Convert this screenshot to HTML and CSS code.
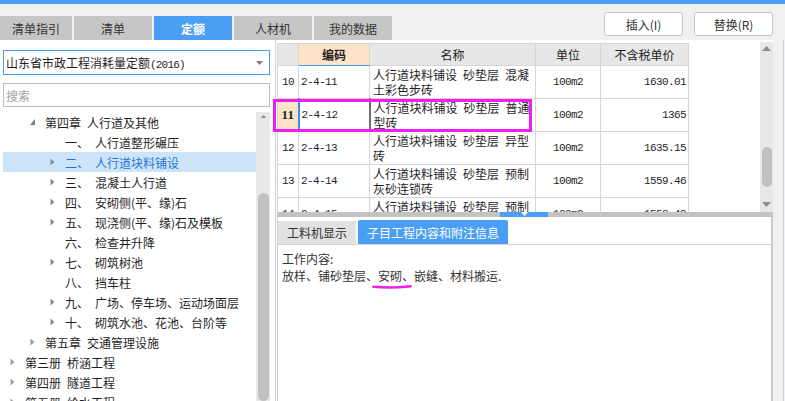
FILE: index.html
```html
<!DOCTYPE html>
<html lang="zh-CN">
<head>
    <meta charset="UTF-8">
    <meta name="viewport" content="width=device-width, initial-scale=1.0">
    <title>定额</title>
    <link rel="stylesheet" href="styles.css">
</head>
<body>
    <div class="topbar"></div>

    <div class="toolbar">
        <div class="tabs">
            <div class="tab first">清单指引</div>
            <div class="tab">清单</div>
            <div class="tab active">定额</div>
            <div class="tab">人材机</div>
            <div class="tab">我的数据</div>
        </div>
        <div class="actions">
            <button class="btn">插入(I)</button>
            <button class="btn">替换(R)</button>
        </div>
    </div>

    <div class="main">
        <!-- left: quota library tree -->
        <div class="left">
            <div class="select">
                <span>山东省市政工程消耗量定额<span class="num">(2016)</span></span>
                <svg class="caret" width="7" height="4" viewBox="0 0 7 4"><polygon points="0,0 7,0 3.5,4" fill="#7a7a7a"/></svg>
            </div>
            <div class="search">搜索</div>
            <div class="tree-wrap">
                <ul class="tree">
                    <li class="node l1"><span class="tog"><svg width="5" height="6" viewBox="0 0 5 6"><polygon points="5,0 5,6 0,6" fill="#7d7d7d"/></svg></span>第四章&ensp;人行道及其他</li>
                    <li class="node l2"><span class="tog"></span><span class="idx">一、</span>人行道整形碾压</li>
                    <li class="node l2 selected"><span class="tog"><svg width="5" height="8" viewBox="0 0 5 8"><polygon points="0.5,0.5 4.5,4 0.5,7.5" fill="#8a8a8a"/></svg></span><span class="idx">二、</span>人行道块料铺设</li>
                    <li class="node l2"><span class="tog"><svg width="5" height="8" viewBox="0 0 5 8"><polygon points="0.5,0.5 4.5,4 0.5,7.5" fill="#8a8a8a"/></svg></span><span class="idx">三、</span>混凝土人行道</li>
                    <li class="node l2"><span class="tog"><svg width="5" height="8" viewBox="0 0 5 8"><polygon points="0.5,0.5 4.5,4 0.5,7.5" fill="#8a8a8a"/></svg></span><span class="idx">四、</span>安砌侧(平、缘)石</li>
                    <li class="node l2"><span class="tog"><svg width="5" height="8" viewBox="0 0 5 8"><polygon points="0.5,0.5 4.5,4 0.5,7.5" fill="#8a8a8a"/></svg></span><span class="idx">五、</span>现浇侧(平、缘)石及模板</li>
                    <li class="node l2"><span class="tog"></span><span class="idx">六、</span>检查井升降</li>
                    <li class="node l2"><span class="tog"><svg width="5" height="8" viewBox="0 0 5 8"><polygon points="0.5,0.5 4.5,4 0.5,7.5" fill="#8a8a8a"/></svg></span><span class="idx">七、</span>砌筑树池</li>
                    <li class="node l2"><span class="tog"></span><span class="idx">八、</span>挡车柱</li>
                    <li class="node l2"><span class="tog"><svg width="5" height="8" viewBox="0 0 5 8"><polygon points="0.5,0.5 4.5,4 0.5,7.5" fill="#8a8a8a"/></svg></span><span class="idx">九、</span>广场、停车场、运动场面层</li>
                    <li class="node l2"><span class="tog"><svg width="5" height="8" viewBox="0 0 5 8"><polygon points="0.5,0.5 4.5,4 0.5,7.5" fill="#8a8a8a"/></svg></span><span class="idx">十、</span>砌筑水池、花池、台阶等</li>
                    <li class="node l1"><span class="tog"><svg width="5" height="8" viewBox="0 0 5 8"><polygon points="0.5,0.5 4.5,4 0.5,7.5" fill="#9a9a9a"/></svg></span>第五章&ensp;交通管理设施</li>
                    <li class="node l0"><span class="tog"><svg width="5" height="8" viewBox="0 0 5 8"><polygon points="0.5,0.5 4.5,4 0.5,7.5" fill="#a0a0a0"/></svg></span>第三册&ensp;桥涵工程</li>
                    <li class="node l0"><span class="tog"><svg width="5" height="8" viewBox="0 0 5 8"><polygon points="0.5,0.5 4.5,4 0.5,7.5" fill="#a0a0a0"/></svg></span>第四册&ensp;隧道工程</li>
                    <li class="node l0"><span class="tog"><svg width="5" height="8" viewBox="0 0 5 8"><polygon points="0.5,0.5 4.5,4 0.5,7.5" fill="#a0a0a0"/></svg></span>第五册&ensp;给水工程</li>
                </ul>
                <div class="vscroll tree-scroll">
                    <svg class="arrow" width="9" height="5" viewBox="0 0 9 5"><polygon points="0,5 9,5 4.5,0" fill="#8c8c8c"/></svg>
                    <div class="thumb"></div>
                </div>
            </div>
        </div>

        <!-- right: quota grid + detail -->
        <div class="right">
            <div class="grid-area">
                <div class="grid-box">
                    <table class="grid">
                        <colgroup>
                            <col class="c-no"><col class="c-code"><col class="c-name"><col class="c-unit"><col class="c-price">
                        </colgroup>
                        <thead>
                            <tr><th></th><th class="key">编码</th><th>名称</th><th>单位</th><th>不含税单价</th></tr>
                        </thead>
                        <tbody>
                            <tr>
                                <td class="no mono">10</td>
                                <td class="code mono">2-4-11</td>
                                <td class="name">人行道块料铺设&ensp;砂垫层&ensp;混凝<br>土彩色步砖</td>
                                <td class="unit mono">100m2</td>
                                <td class="price mono">1630.01</td>
                            </tr>
                            <tr class="current">
                                <td class="no">11</td>
                                <td class="code mono">2-4-12</td>
                                <td class="name">人行道块料铺设&ensp;砂垫层&ensp;普通<br>型砖</td>
                                <td class="unit mono">100m2</td>
                                <td class="price mono">1365</td>
                            </tr>
                            <tr>
                                <td class="no mono">12</td>
                                <td class="code mono">2-4-13</td>
                                <td class="name">人行道块料铺设&ensp;砂垫层&ensp;异型<br>砖</td>
                                <td class="unit mono">100m2</td>
                                <td class="price mono">1635.15</td>
                            </tr>
                            <tr>
                                <td class="no mono">13</td>
                                <td class="code mono">2-4-14</td>
                                <td class="name">人行道块料铺设&ensp;砂垫层&ensp;预制<br>灰砂连锁砖</td>
                                <td class="unit mono">100m2</td>
                                <td class="price mono">1559.46</td>
                            </tr>
                            <tr>
                                <td class="no mono">14</td>
                                <td class="code mono">2-4-15</td>
                                <td class="name">人行道块料铺设&ensp;砂垫层&ensp;预制<br>混凝土砖</td>
                                <td class="unit mono">100m2</td>
                                <td class="price mono">1553.48</td>
                            </tr>
                        </tbody>
                    </table>
                </div>
                <div class="vscroll grid-scroll">
                    <svg class="arrow" width="9" height="5" viewBox="0 0 9 5"><polygon points="0,5 9,5 4.5,0" fill="#8c8c8c"/></svg>
                    <div class="thumb"></div>
                    <svg class="arrow down" width="9" height="5" viewBox="0 0 9 5"><polygon points="0,0 9,0 4.5,5" fill="#8c8c8c"/></svg>
                </div>
                <div class="focus-box"></div>
            </div>

            <div class="splitter">
                <span class="handle"><svg width="7" height="4" viewBox="0 0 7 4"><polygon points="0,0 7,0 3.5,4" fill="#fff"/></svg></span>
            </div>

            <div class="bottom">
                <div class="btabs">
                    <div class="btab">工料机显示</div>
                    <div class="btab active">子目工程内容和附注信息</div>
                </div>
                <div class="content">
                    <p>工作内容:</p>
                    <p>放样、铺砂垫层、<span class="mark">安砌<svg class="scribble" width="40" height="6" viewBox="0 0 40 6"><path d="M1.5 2.8 Q20 4.6 38.5 2.2" fill="none" stroke="#f01ef0" stroke-width="2.4" stroke-linecap="round"/></svg></span>、嵌缝、材料搬运.</p>
                </div>
            </div>
        </div>

        <div class="edge"></div>
    </div>
</body>
</html>
```

FILE: styles.css
```css
* {
    margin: 0;
    padding: 0;
    box-sizing: border-box;
}

body {
    width: 785px;
    height: 401px;
    overflow: hidden;
    background: #f0f0f0;
    font-family: "Noto Sans CJK SC", sans-serif;
    font-size: 12px;
    color: #1f1f1f;
}

.mono {
    font-family: "Liberation Mono", monospace;
    font-size: 11px;
    letter-spacing: -0.6px;
}

.topbar {
    height: 4px;
    background: #4a9ff5;
}

/* top tabs and buttons */
.toolbar {
    height: 36px;
    display: flex;
    justify-content: space-between;
}

.tabs {
    display: flex;
    align-items: flex-end;
    gap: 2px;
}

.tab {
    width: 78px;
    height: 24px;
    background: #c6c6c6;
    color: #333;
    display: flex;
    align-items: center;
    justify-content: center;
}

.tab.first {
    width: 72px;
}

.tab.active {
    background: #4a9ff5;
    color: #fff;
    font-weight: bold;
}

.actions {
    display: flex;
    gap: 11px;
    padding: 8px 12px 0 0;
}

.btn {
    width: 79px;
    height: 24px;
    background: #fff;
    border: 1px solid #c6c6c6;
    border-radius: 3px;
    font: inherit;
    color: #333;
}

/* main area */
.main {
    height: 361px;
    display: flex;
    background: #fff;
    position: relative;
}

.left {
    width: 276px;
    border-right: 1px solid #d3d3d3;
    padding-left: 3px;
    display: flex;
    flex-direction: column;
}

.select {
    margin-top: 10px;
    width: 267px;
    height: 25px;
    border: 1px solid #4a9ff5;
    padding: 0 6px 0 2px;
    display: flex;
    align-items: center;
    justify-content: space-between;
}

.select .num {
    font-family: "Liberation Mono", monospace;
    font-size: 11px;
    letter-spacing: -0.8px;
}

.search {
    margin-top: 8px;
    width: 267px;
    height: 24px;
    border: 1px solid #bdbdbd;
    padding-left: 2px;
    color: #a3a3a3;
    display: flex;
    align-items: center;
}

.tree-wrap {
    margin-top: 5px;
    width: 267px;
    flex: 1;
    display: flex;
    overflow: hidden;
}

.tree {
    flex: 1;
    list-style: none;
}

.node {
    height: 20px;
    display: flex;
    align-items: center;
    white-space: nowrap;
    color: #1f1f1f;
}

.node.l0 { padding-left: 7px; }
.node.l1 { padding-left: 27px; }
.node.l2 { padding-left: 47px; }

.node.selected {
    background: #cce4f7;
    color: #1f74e0;
}

.tog {
    width: 15px;
    height: 20px;
    display: flex;
    align-items: center;
}

.idx {
    width: 30px;
}

/* scrollbars */
.vscroll {
    background: #e8e8e8;
    display: flex;
    flex-direction: column;
    align-items: center;
}

.vscroll .thumb {
    background: #c1c1c1;
    border-radius: 6px;
}

.tree-scroll {
    width: 14px;
    padding-top: 3px;
}

.tree-scroll .thumb {
    margin-top: 75px;
    width: 11px;
    height: 300px;
}

.grid-scroll {
    width: 13px;
    margin-top: 2px;
    padding: 4px 0 5px;
}

.grid-scroll .thumb {
    margin-top: 96px;
    width: 10px;
    height: 40px;
}

.grid-scroll .down {
    margin-top: auto;
}

/* right side */
.right {
    width: 497px;
    padding-left: 1px;
    display: flex;
    flex-direction: column;
}

.grid-area {
    height: 172px;
    display: flex;
    position: relative;
}

.grid-box {
    flex: 1;
    padding-top: 3px;
    overflow: hidden;
}

.grid {
    width: 411px;
    table-layout: fixed;
    border-collapse: collapse;
}

.c-no { width: 21px; }
.c-code { width: 71px; }
.c-name { width: 166px; }
.c-unit { width: 65px; }
.c-price { width: 88px; }

.grid th,
.grid td {
    border: 1px solid #d6d6d6;
    white-space: nowrap;
}

.grid th {
    height: 22px;
    background: #e7e7e7;
    font-weight: normal;
    color: #222;
}

.grid th.key {
    background: #fde4c6;
    font-weight: bold;
    border-bottom: 1px solid #4a9ff5;
}

.grid td {
    height: 33px;
}

.grid .no {
    text-align: center;
}

.grid .code {
    padding-left: 2px;
}

.grid .name {
    padding: 0 3px;
    line-height: 15px;
}

.grid .unit {
    text-align: center;
}

.grid .price {
    text-align: right;
    padding-right: 2px;
}

.current .no {
    background: #fde4c6;
    font-family: "Liberation Serif", serif;
    font-weight: bold;
    font-size: 13px;
}

.current .code {
    border-left: 2px solid #3d8fe9;
}

.current .name {
    border-left: 2px solid #6e6e6e;
}

.focus-box {
    position: absolute;
    left: -4px;
    top: 59px;
    width: 259px;
    height: 33px;
    border: 3px solid #f01ef0;
}

.splitter {
    height: 5px;
    background: #c3c3c3;
    padding-left: 223px;
}

.handle {
    width: 48px;
    height: 5px;
    background: #4a9ff5;
    display: flex;
    justify-content: center;
    align-items: flex-start;
}

.bottom {
    flex: 1;
    border-left: 1px solid #cfcfcf;
    border-right: 2px solid #c9c9c9;
    display: flex;
    flex-direction: column;
}

.btabs {
    height: 27px;
    display: flex;
    align-items: flex-end;
    gap: 2px;
}

.btab {
    width: 78px;
    height: 23px;
    background: #e1e1e1;
    color: #333;
    display: flex;
    align-items: center;
    justify-content: center;
}

.btab.active {
    width: 150px;
    height: 24px;
    background: #4a9ff5;
    color: #fff;
    border-radius: 2px 2px 0 0;
}

.content {
    flex: 1;
    border-top: 1px solid #d0d0d0;
    padding: 5px 0 0 4px;
    line-height: 17px;
    color: #333;
}

.mark {
    position: relative;
}

.scribble {
    position: absolute;
    left: -6px;
    top: 100%;
}

.edge {
    width: 12px;
    background: #f0f0f0;
    border-right: 1px solid #eef3fa;
    box-shadow: inset -1px 0 #cfcfcf;
}
```
